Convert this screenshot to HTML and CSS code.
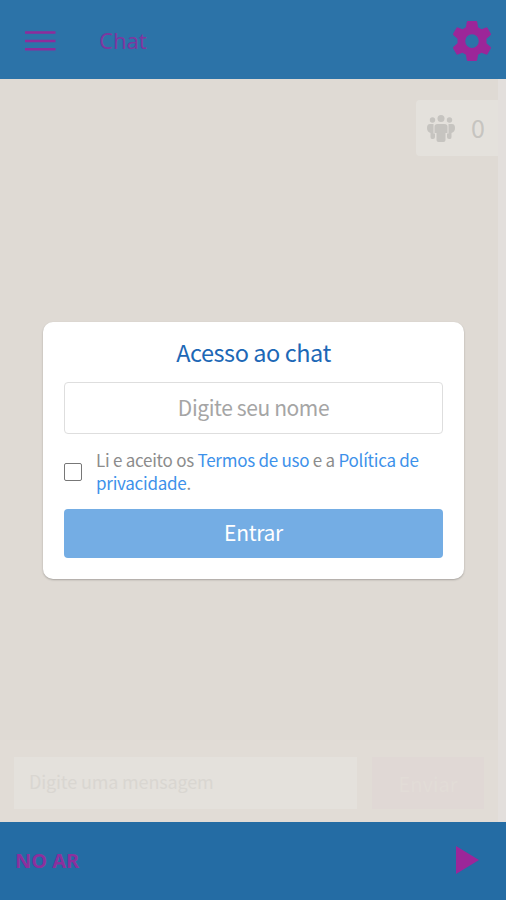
FILE: index.html
```
<!DOCTYPE html>
<html lang="pt-BR">
  <head>
    <meta charset="utf-8">
    <meta name="viewport" content="width=device-width, initial-scale=1">
    <title>Chat</title>
    <link rel="stylesheet" href="styles.css">
  </head>
  <body>
    <header class="topbar">
      <svg class="menu-icon" viewBox="0 0 31 22" width="31" height="22">
        <path d="M0 2.500h30.500M0 11h30.500M0 19.300h30.500" stroke="currentColor" stroke-width="2.600"/>
      </svg>
      <h1>Chat</h1>
      <svg class="gear-icon" viewBox="0 0 38 40" width="38" height="40">
        <path fill="currentColor" fill-rule="evenodd" d="M15 0h8q1 0 1.200 1l.9 5.200 3.400 2 4.600-1.800q1-.3 1.500.6l3.200 5.500q.5 1-.3 1.700L33.500 17.800v4.400l4 3.600q.8.700.3 1.700l-3.200 5.500q-.5.900-1.500.6l-4.600-1.800-3.400 2-.9 5.200q-.2 1-1.200 1h-8q-1 0-1.200-1l-.9-5.200-3.400-2-4.600 1.800q-1 .3-1.500-.6L.2 27.500q-.5-1 .3-1.700l4-3.600v-4.400l-4-3.600q-.8-.7-.3-1.700L3.400 7q.5-.9 1.500-.6l4.600 1.800 3.400-2 .9-5.200Q14 0 15 0ZM19 13.300a6.800 6.800 0 1 0 0 13.600a6.800 6.800 0 1 0 0-13.600Z"/>
      </svg>
    </header>

    <main class="chat">
      <div class="messages">
        <div class="online">
          <svg viewBox="0 0 28 27" width="28" height="27" fill="currentColor">
            <circle cx="14" cy="3.500" r="3.500"/>
            <circle cx="5.500" cy="5" r="2.700"/>
            <circle cx="22.500" cy="5" r="2.700"/>
            <path d="M10.500 9h7q3 0 3 2.500V18h-2v7q0 2-2 2h-5q-2 0-2-2v-7h-2v-6.500Q7.500 9 10.500 9Z"/>
            <path d="M3 9h3.500v9.500H8V22q0 2-2 2H5q-1.500 0-1.500-2v-4Q0 17 0 13q0-4 3-4ZM25 9h-3.500v9.500H20V22q0 2 2 2h1q1.500 0 1.500-2v-4Q28 17 28 13q0-4-3-4Z"/>
          </svg>
          <span>0</span>
        </div>
      </div>
      <div class="composer">
        <div class="message-input">Digite uma mensagem</div>
        <div class="send">Enviar</div>
      </div>

      <div class="overlay">
        <form class="modal">
          <h2>Acesso ao chat</h2>
          <input class="name" type="text" placeholder="Digite seu nome">
          <div class="terms">
            <input type="checkbox" id="terms">
            <label for="terms">Li e aceito os <a href="#">Termos de uso</a> e a <a href="#">Política de privacidade</a>.</label>
          </div>
          <button type="button">Entrar</button>
        </form>
      </div>
    </main>

    <footer class="player">
      <span>NO AR</span>
      <svg viewBox="0 0 23 28" width="23" height="28">
        <path d="M0 0 23 14 0 28Z" fill="currentColor"/>
      </svg>
    </footer>
  </body>
</html>
```
FILE: styles.css
```
* {
  box-sizing: border-box;
}

html, body {
  height: 100%;
  margin: 0;
}

body {
  display: flex;
  flex-direction: column;
  font-family: "Noto Sans CJK SC", "Noto Sans", sans-serif;
  background: #dfdad4;
}

h1, h2 {
  margin: 0;
  font-weight: 400;
}

/* top bar */
.topbar {
  display: flex;
  align-items: center;
  height: 79px;
  padding: 3px 15px 0 25px;
  background: #2c73a8;
  color: #9c2699;
}

.menu-icon {
  color: #8f2b9b;
}

.topbar h1 {
  margin-left: 43px;
  padding-bottom: 2px;
  font-family: "Noto Sans", sans-serif;
  font-size: 22px;
  line-height: 30px;
  color: #7e379f;
}

.gear-icon {
  margin-left: auto;
}

/* chat area */
.chat {
  position: relative;
  flex: 1;
  display: flex;
  flex-direction: column;
  border-right: 8px solid #e3dfdc;
}

.messages {
  flex: 1;
  display: flex;
  justify-content: flex-end;
  align-items: flex-start;
  padding-top: 21px;
}

.online {
  display: flex;
  align-items: center;
  gap: 16px;
  width: 82px;
  height: 56px;
  padding-left: 11px;
  border-radius: 4px 0 0 4px;
  background: #e4e1dc;
  color: #c6c4c0;
  font-size: 25px;
  line-height: 34px;
}

.online span {
  padding-bottom: 2px;
}

.composer {
  display: flex;
  gap: 15px;
  height: 82px;
  padding: 17px 14px 13px;
  background: #e1dcd6;
}

.message-input {
  flex: 1;
  padding-left: 15px;
  background: #e4e1dc;
  color: #d9d6d1;
  font-size: 18px;
  line-height: 49px;
  letter-spacing: -0.15px;
}

.send {
  width: 112px;
  background: #e0d8d5;
  color: #e2dcd7;
  font-size: 20px;
  line-height: 54px;
  text-align: center;
}

/* login modal */
.overlay {
  position: absolute;
  inset: 0 -9px 0 0;
  display: flex;
  justify-content: center;
  align-items: center;
}

.modal {
  width: 421px;
  height: 257px;
  padding: 14px 21px 21px;
  border-radius: 10px;
  background: #fff;
  box-shadow: 0 1px 2px rgba(0, 0, 0, 0.25);
}

.modal h2 {
  font-size: 23.500px;
  line-height: 32px;
  letter-spacing: -0.45px;
  text-align: center;
  color: #1d68b6;
}

.name {
  display: block;
  width: 100%;
  height: 52px;
  margin-top: 14px;
  padding: 0 2px 2px;
  border: 1.500px solid #dedede;
  border-radius: 4px;
  background: #fff;
  font-family: inherit;
  font-size: 21px;
  letter-spacing: -0.4px;
  text-align: center;
}

.name::placeholder {
  color: #a5a5a5;
}

.terms {
  display: flex;
  align-items: center;
  gap: 14px;
  height: 46px;
  margin: 15px 0 14px;
}

.terms input {
  flex: none;
  appearance: none;
  width: 18px;
  height: 18px;
  margin: 0;
  border: 1.500px solid #777;
  border-radius: 2px;
}

.terms label {
  padding-bottom: 2px;
  font-size: 17px;
  line-height: 23px;
  letter-spacing: -0.25px;
  color: #8c8c8c;
}

.terms a {
  color: #3d91ea;
  text-decoration: none;
}

.modal button {
  display: block;
  width: 100%;
  height: 49px;
  padding: 0 0 3px;
  border: 0;
  border-radius: 4px;
  background: #74ade4;
  color: #fff;
  font-family: inherit;
  font-size: 21px;
  letter-spacing: -0.3px;
}

/* player bar */
.player {
  display: flex;
  align-items: center;
  justify-content: space-between;
  height: 78px;
  padding: 0 27px 2px 15px;
  background: #246ca4;
  color: #9c2699;
}

.player span {
  font-family: "Noto Sans", sans-serif;
  font-size: 20px;
  font-weight: 700;
  color: #8c309d;
}
```
